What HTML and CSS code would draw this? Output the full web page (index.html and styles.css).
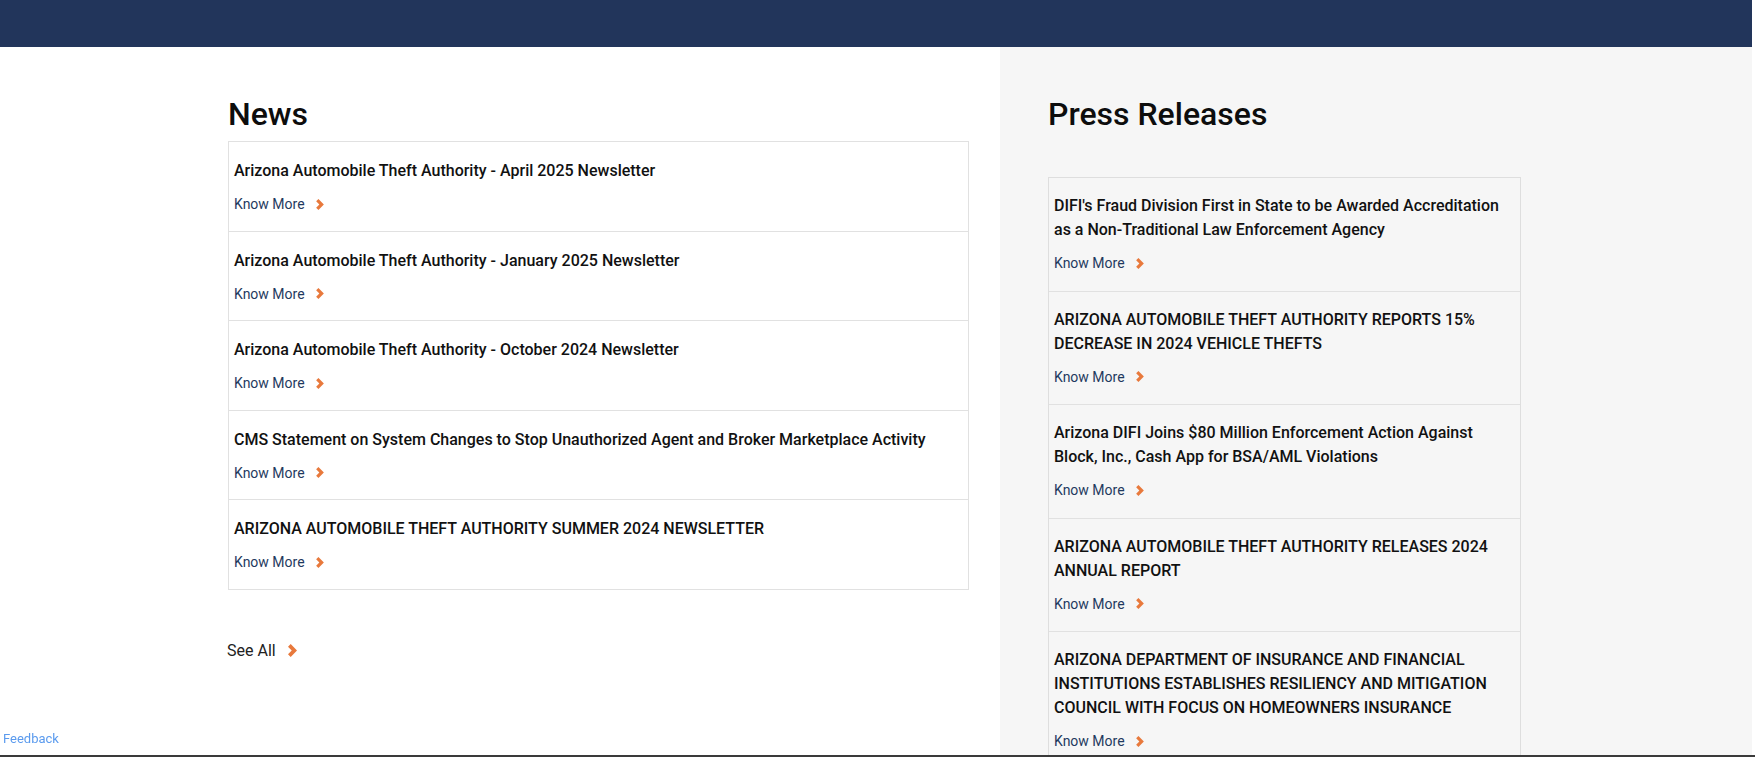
FILE: index.html
```html
<!DOCTYPE html>
<html lang="en">
<head>
<meta charset="utf-8">
<title>News and Press Releases</title>
<link rel="stylesheet" href="styles.css">
</head>
<body>
<div class="page">
  <header class="topbar"></header>
  <main class="content">
    <section class="news-col">
      <h2 class="section-title">News</h2>
      <ul class="card-list news-list">
        <li class="card-item">
          <h3 class="item-title">Arizona Automobile Theft Authority - April 2025 Newsletter</h3>
          <a class="more-link" href="#">Know More <svg class="chev" viewBox="0 0 7 10" width="8" height="11"><polygon points="0,2.1 2.1,0 7,5 2.1,10 0,7.9 2.9,5"/></svg></a>
        </li>
        <li class="card-item">
          <h3 class="item-title">Arizona Automobile Theft Authority - January 2025 Newsletter</h3>
          <a class="more-link" href="#">Know More <svg class="chev" viewBox="0 0 7 10" width="8" height="11"><polygon points="0,2.1 2.1,0 7,5 2.1,10 0,7.9 2.9,5"/></svg></a>
        </li>
        <li class="card-item">
          <h3 class="item-title">Arizona Automobile Theft Authority - October 2024 Newsletter</h3>
          <a class="more-link" href="#">Know More <svg class="chev" viewBox="0 0 7 10" width="8" height="11"><polygon points="0,2.1 2.1,0 7,5 2.1,10 0,7.9 2.9,5"/></svg></a>
        </li>
        <li class="card-item">
          <h3 class="item-title">CMS Statement on System Changes to Stop Unauthorized Agent and Broker Marketplace Activity</h3>
          <a class="more-link" href="#">Know More <svg class="chev" viewBox="0 0 7 10" width="8" height="11"><polygon points="0,2.1 2.1,0 7,5 2.1,10 0,7.9 2.9,5"/></svg></a>
        </li>
        <li class="card-item">
          <h3 class="item-title">ARIZONA AUTOMOBILE THEFT AUTHORITY SUMMER 2024 NEWSLETTER</h3>
          <a class="more-link" href="#">Know More <svg class="chev" viewBox="0 0 7 10" width="8" height="11"><polygon points="0,2.1 2.1,0 7,5 2.1,10 0,7.9 2.9,5"/></svg></a>
        </li>
      </ul>
      <a class="see-all" href="#">See All <svg class="chev-lg" viewBox="0 0 7 10" width="9" height="13"><polygon points="0,2.1 2.1,0 7,5 2.1,10 0,7.9 2.9,5"/></svg></a>
    </section>
    <section class="press-col">
      <h2 class="section-title press-title">Press Releases</h2>
      <ul class="card-list press-list">
        <li class="card-item">
          <h3 class="item-title">DIFI's Fraud Division First in State to be Awarded Accreditation as a Non-Traditional Law Enforcement Agency</h3>
          <a class="more-link" href="#">Know More <svg class="chev" viewBox="0 0 7 10" width="8" height="11"><polygon points="0,2.1 2.1,0 7,5 2.1,10 0,7.9 2.9,5"/></svg></a>
        </li>
        <li class="card-item">
          <h3 class="item-title">ARIZONA AUTOMOBILE THEFT AUTHORITY REPORTS 15% DECREASE IN 2024 VEHICLE THEFTS</h3>
          <a class="more-link" href="#">Know More <svg class="chev" viewBox="0 0 7 10" width="8" height="11"><polygon points="0,2.1 2.1,0 7,5 2.1,10 0,7.9 2.9,5"/></svg></a>
        </li>
        <li class="card-item">
          <h3 class="item-title">Arizona DIFI Joins $80 Million Enforcement Action Against Block, Inc., Cash App for BSA/AML Violations</h3>
          <a class="more-link" href="#">Know More <svg class="chev" viewBox="0 0 7 10" width="8" height="11"><polygon points="0,2.1 2.1,0 7,5 2.1,10 0,7.9 2.9,5"/></svg></a>
        </li>
        <li class="card-item">
          <h3 class="item-title">ARIZONA AUTOMOBILE THEFT AUTHORITY RELEASES 2024 ANNUAL REPORT</h3>
          <a class="more-link" href="#">Know More <svg class="chev" viewBox="0 0 7 10" width="8" height="11"><polygon points="0,2.1 2.1,0 7,5 2.1,10 0,7.9 2.9,5"/></svg></a>
        </li>
        <li class="card-item">
          <h3 class="item-title">ARIZONA DEPARTMENT OF INSURANCE AND FINANCIAL INSTITUTIONS ESTABLISHES RESILIENCY AND MITIGATION COUNCIL WITH FOCUS ON HOMEOWNERS INSURANCE</h3>
          <a class="more-link" href="#">Know More <svg class="chev" viewBox="0 0 7 10" width="8" height="11"><polygon points="0,2.1 2.1,0 7,5 2.1,10 0,7.9 2.9,5"/></svg></a>
        </li>
      </ul>
    </section>
  </main>
</div>
<a class="feedback" href="#">Feedback</a>
<div class="bottom-edge"></div>
</body>
</html>
```

FILE: styles.css
```css
* { box-sizing: border-box; }

html, body {
  margin: 0;
  padding: 0;
  background: #ffffff;
}

body {
  font-family: Roboto, "Liberation Sans", Arial, sans-serif;
  color: #111111;
}

.page {
  margin-right: 3px;
}

.topbar {
  height: 47px;
  background: #22355b;
}

.content {
  display: grid;
  grid-template-columns: 1000px 1fr;
  min-height: 720px;
}

.news-col {
  padding: 47px 31px 60px 228px;
  background: #ffffff;
}

.press-col {
  padding: 47px 30px 0 48px;
  background: #f6f6f6;
}

.section-title {
  margin: 0 0 6px;
  font-size: 32px;
  line-height: 41px;
  font-weight: 500;
  color: #0d0d0d;
}

.press-title {
  margin-bottom: 42px;
}

.card-list {
  list-style: none;
  margin: 0;
  padding: 0;
  border: 1px solid #e1e1e1;
}

.press-list {
  width: 473px;
  border-color: #dedede;
}

.card-item {
  padding: 17px 5px 16.5px;
  border-top: 1px solid #e1e1e1;
}

.press-list .card-item {
  padding: 16px 5px 17.5px;
}

.card-item:first-child {
  border-top: none;
}

.item-title {
  margin: 0 0 11px;
  font-size: 16px;
  line-height: 24px;
  font-weight: 500;
  color: #111111;
}

.more-link {
  display: flex;
  align-items: center;
  gap: 11px;
  width: max-content;
  font-size: 14px;
  line-height: 20px;
  color: #1f3a60;
  text-decoration: none;
}

.chev, .chev-lg {
  fill: #e8793c;
  display: block;
}

.see-all {
  display: flex;
  align-items: center;
  gap: 12px;
  width: max-content;
  margin-top: 49px;
  margin-left: -1px;
  font-size: 16px;
  line-height: 24px;
  color: #222222;
  text-decoration: none;
}

.feedback {
  position: fixed;
  left: 3px;
  bottom: 10px;
  font-size: 13px;
  line-height: 16px;
  color: #5b9bee;
  text-decoration: none;
}

.bottom-edge {
  position: fixed;
  left: 0;
  right: 0;
  bottom: 0;
  height: 2px;
  background: #3a3a3a;
}
```
